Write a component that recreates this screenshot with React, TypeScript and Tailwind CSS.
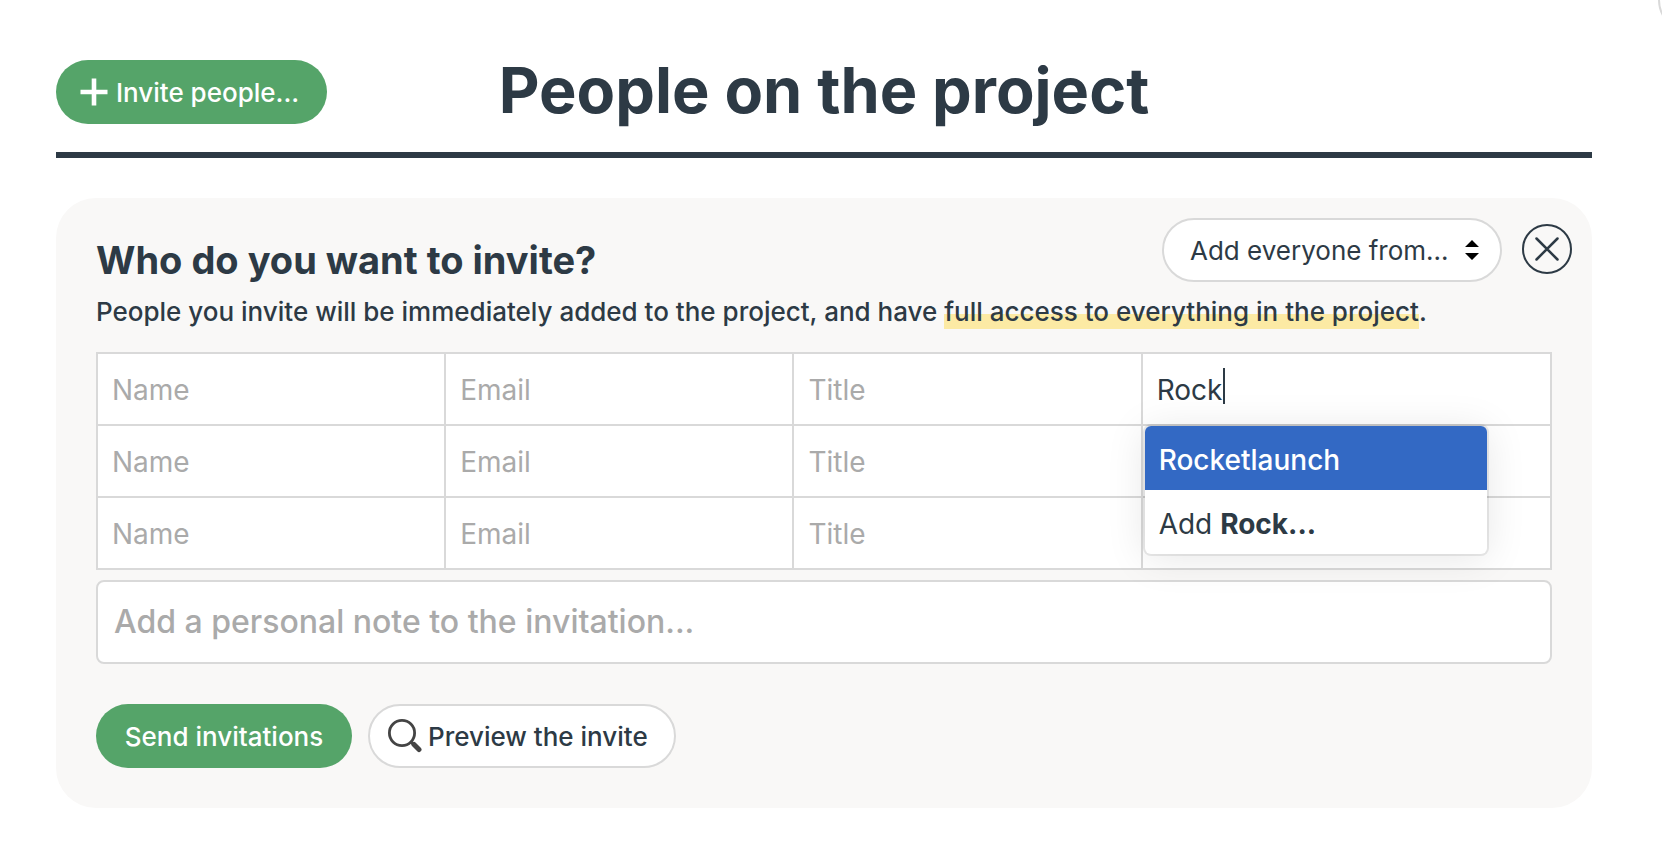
import { useState } from "react"

const people = [
  { id: 1, company: "Rock" },
  { id: 2, company: "" },
  { id: 3, company: "" },
]

const cell = "border-2 border-[#d9d9d9] p-0"
const field =
  "block h-[70px] w-full bg-transparent px-3.5 pt-0.5 text-[28px] text-[#2d3a45] caret-transparent outline-none placeholder:text-[#aaaaaa]"

function PlusIcon() {
  return (
    <svg width="28" height="28" viewBox="0 0 28 28" fill="none" stroke="currentColor" strokeWidth="4.6" aria-hidden="true">
      <path d="M14 0.5v27M0.5 14h27" />
    </svg>
  )
}

function CloseIcon() {
  return (
    <svg width="50" height="50" viewBox="0 0 50 50" fill="none" stroke="currentColor" aria-hidden="true">
      <circle cx="25" cy="25" r="24" strokeWidth="2" />
      <path d="M14.5 14.5l21 21M35.5 14.5l-21 21" strokeWidth="2.5" strokeLinecap="round" />
    </svg>
  )
}

function SearchIcon() {
  return (
    <svg width="34" height="34" viewBox="0 0 34 34" fill="none" stroke="#444444" aria-hidden="true">
      <circle cx="14" cy="14" r="12.6" strokeWidth="2.8" />
      <path d="M22.5 22.5l4 4" strokeWidth="3" />
      <path d="M26 25.5l5 5" strokeWidth="5" strokeLinecap="round" />
    </svg>
  )
}

function CompanyMenu() {
  return (
    <div
      role="listbox"
      aria-label="Companies"
      className="absolute top-full left-0.5 z-10 mt-0.5 w-[342px] overflow-hidden rounded-md bg-white text-[28px] shadow-[0_0_0_2px_rgba(0,0,0,0.08),0_4px_40px_rgba(0,0,0,0.1)]"
    >
      <button role="option" aria-selected="true" className="block h-16 w-full bg-[#3369c4] px-3.5 pt-1 text-left font-medium text-white">
        Rocketlaunch
      </button>
      <button role="option" aria-selected="false" className="block h-16 w-full px-3.5 pt-1 text-left">
        Add <strong className="font-bold">Rock...</strong>
      </button>
    </div>
  )
}

export default function App() {
  const [company, setCompany] = useState("Rock")

  return (
    <div className="relative min-h-screen overflow-hidden bg-white pt-14 pr-[70px] pb-13 pl-14 font-['Inter',sans-serif] text-[#2d3a45]">
      <button aria-label="Menu" className="absolute -top-8 -right-[60px] h-16 w-16 rounded-full border-2 border-[#d9d9d9]" />

      <header className="grid grid-cols-[1fr_auto_1fr] items-end border-b-6 border-[#2d3a45] pb-7">
        <button className="flex h-16 items-center gap-2 justify-self-start rounded-full bg-[#55a469] pr-7 pl-6 text-[26px] font-medium text-white">
          <PlusIcon />
          Invite people...
        </button>
        <h1 className="text-[63px] leading-[68px] font-bold">People on the project</h1>
      </header>

      <main className="mt-10 rounded-[40px] bg-[#f9f8f7] px-10 pb-10">
        <div className="-mr-5 flex items-start justify-between pt-5">
          <h2 className="mt-[18px] text-[38px] leading-[48px] font-bold">Who do you want to invite?</h2>
          <div className="flex items-start gap-5">
            <div className="relative">
              <select
                aria-label="Add everyone from"
                className="h-16 w-[340px] appearance-none rounded-full border-2 border-[#d9d9d9] bg-white pr-12 pl-6.5 text-[26px] outline-none"
              >
                <option>Add everyone from...</option>
              </select>
              <svg className="pointer-events-none absolute top-[22px] right-[23px]" width="14" height="20" viewBox="0 0 14 20" aria-hidden="true">
                <path d="M7 0l7 7H0zM7 20l7-7H0z" />
              </svg>
            </div>
            <button aria-label="Close" className="mt-1.5">
              <CloseIcon />
            </button>
          </div>
        </div>

        <p className="mt-2 text-[26px] leading-10 font-medium">
          People you invite will be immediately added to the project, and have{" "}
          <mark className="bg-transparent bg-linear-to-b from-transparent from-55% to-[#fceaa4] to-55% pb-0.5 text-inherit">
            full access to everything in the project
          </mark>
          .
        </p>

        <table className="mt-5 w-full table-fixed border-collapse bg-white">
          <colgroup>
            <col className="w-[23.95%]" />
            <col className="w-[23.95%]" />
            <col className="w-[23.95%]" />
            <col />
          </colgroup>
          <tbody>
            {people.map((person) => (
              <tr key={person.id}>
                <td className={cell}>
                  <input aria-label="Name" placeholder="Name" className={field} />
                </td>
                <td className={cell}>
                  <input aria-label="Email" placeholder="Email" className={field} />
                </td>
                <td className={cell}>
                  <input aria-label="Title" placeholder="Title" className={field} />
                </td>
                <td className={cell}>
                  {person.company ? (
                    <div className="relative">
                      <input
                        aria-label="Company"
                        value={company}
                        onChange={(e) => setCompany(e.target.value)}
                        className={field}
                      />
                      <span className="absolute top-3.5 left-20 h-9 w-0.5 bg-[#2d3a45]" />
                      <CompanyMenu />
                    </div>
                  ) : (
                    <input aria-label="Company" className={field} />
                  )}
                </td>
              </tr>
            ))}
          </tbody>
        </table>

        <textarea
          aria-label="Personal note"
          rows={1}
          placeholder="Add a personal note to the invitation..."
          className="mt-2.5 block h-[84px] w-full resize-none rounded-lg border-2 border-[#d9d9d9] bg-white px-4 py-5 text-[32px] leading-10 font-medium outline-none placeholder:text-[#aaaaaa]"
        />

        <div className="mt-10 flex gap-4">
          <button className="h-16 w-64 rounded-full bg-[#55a469] text-[26px] font-medium text-white">Send invitations</button>
          <button className="flex h-16 items-center gap-1.5 rounded-full border-2 border-[#d9d9d9] bg-white pr-6.5 pl-4.5 text-[26px] font-medium">
            <SearchIcon />
            Preview the invite
          </button>
        </div>
      </main>
    </div>
  )
}
